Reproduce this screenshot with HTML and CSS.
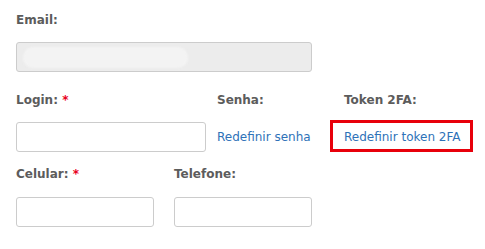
FILE: index.html
```html
<!DOCTYPE html>
<html lang="pt-BR">
  <head>
    <meta charset="UTF-8" />
    <meta name="viewport" content="width=device-width, initial-scale=1.0" />
    <title>Dados do Usuário</title>
    <link rel="stylesheet" href="styles.css">
  </head>
  <body>
    <form class="form">
      <div class="row row-email">
        <div class="field field-wide">
          <label>Email:</label>
          <div class="input input-disabled"><span class="blur"></span></div>
        </div>
      </div>

      <div class="row row-login">
        <div class="field field-login">
          <label>Login: <span class="req">*</span></label>
          <input type="text" class="input" />
        </div>
        <div class="field field-senha">
          <label>Senha:</label>
          <a href="#" class="link">Redefinir senha</a>
        </div>
        <div class="field field-token">
          <label>Token 2FA:</label>
          <a href="#" class="link">Redefinir token 2FA</a>
          <span class="highlight"></span>
        </div>
      </div>

      <div class="row row-phone">
        <div class="field field-half">
          <label>Celular: <span class="req">*</span></label>
          <input type="text" class="input" />
        </div>
        <div class="field field-half">
          <label>Telefone:</label>
          <input type="text" class="input" />
        </div>
      </div>
    </form>
  </body>
</html>
```

FILE: styles.css
```css
body {
  font-family: "DejaVu Sans", Verdana, sans-serif;
  font-size: 12px;
  background-color: #ffffff;
  margin: 0;
  padding: 0;
}

.form {
  padding: 12px 16px 0 16px;
}

.row {
  display: flex;
}

.row-login {
  margin-top: 20px;
}

.row-phone {
  margin-top: 14px;
}

.field {
  display: flex;
  flex-direction: column;
  position: relative;
}

.field label {
  display: block;
  height: 16px;
  line-height: 16px;
  font-weight: bold;
  color: #5c5c5c;
  margin-bottom: 14px;
}

.row-login .field label {
  margin-bottom: 14px;
}

.row-phone .field label {
  margin-bottom: 15px;
}

.req {
  color: #e8001c;
}

.input {
  box-sizing: border-box;
  height: 30px;
  border: 1px solid #cccccc;
  border-radius: 3px;
  background-color: #ffffff;
  padding: 0 6px;
  margin: 0;
  font: inherit;
}

.input-disabled {
  background-color: #ececec;
  display: flex;
  align-items: center;
}

.blur {
  display: block;
  width: 165px;
  height: 21px;
  border-radius: 10px;
  background-color: #f3f3f3;
  filter: blur(1px);
}

.field-wide {
  width: 296px;
}

.field-login {
  width: 190px;
}

.field-senha {
  margin-left: 11px;
  width: 127px;
}

.field-half {
  width: 138px;
}

.field-half + .field-half {
  margin-left: 20px;
}

.link {
  display: block;
  height: 30px;
  line-height: 30px;
  color: #2e72b8;
  text-decoration: none;
}

.highlight {
  position: absolute;
  left: -14px;
  top: 28px;
  width: 137px;
  height: 26px;
  border: 3px solid #e8000b;
}
```
